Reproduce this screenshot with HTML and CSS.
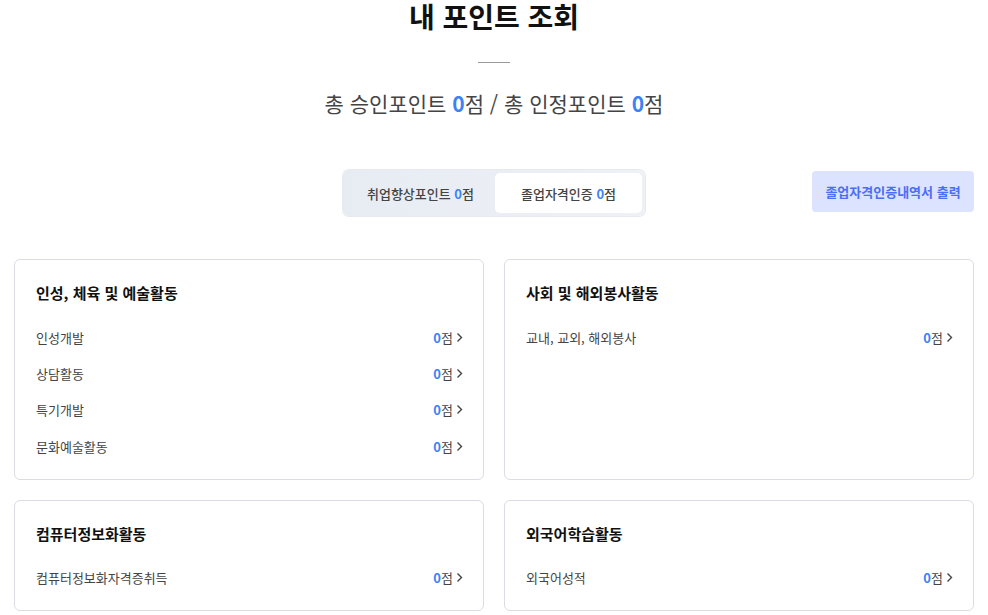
FILE: index.html
```html
<!DOCTYPE html>
<html lang="ko">
<head>
    <meta charset="UTF-8">
    <meta name="viewport" content="width=device-width, initial-scale=1.0">
    <title>내 포인트 조회</title>
    <link rel="stylesheet" href="styles.css">
</head>
<body>
    <div class="page">
        <!-- 상단 제목 -->
        <h1 class="page-title">내 포인트 조회</h1>
        <div class="divider"></div>
        <p class="summary">총 승인포인트 <b class="num">0</b>점 / 총 인정포인트 <b class="num">0</b>점</p>

        <!-- 탭 + 출력 버튼 -->
        <div class="toolbar">
            <div class="tabs">
                <button class="tab">취업향상포인트 <span class="num">0</span>점</button>
                <button class="tab active">졸업자격인증 <span class="num">0</span>점</button>
            </div>
            <button class="print-btn">졸업자격인증내역서 출력</button>
        </div>

        <!-- 영역별 카드 -->
        <div class="cards">
            <div class="card">
                <h2 class="card-title">인성, 체육 및 예술활동</h2>
                <ul class="items">
                    <li><span>인성개발</span><a href="#" class="score"><span class="num">0</span>점<svg width="7" height="11" viewBox="0 0 7 11"><path d="M1.5 1.5l4 4-4 4" fill="none" stroke="#444" stroke-width="1.4"/></svg></a></li>
                    <li><span>상담활동</span><a href="#" class="score"><span class="num">0</span>점<svg width="7" height="11" viewBox="0 0 7 11"><path d="M1.5 1.5l4 4-4 4" fill="none" stroke="#444" stroke-width="1.4"/></svg></a></li>
                    <li><span>특기개발</span><a href="#" class="score"><span class="num">0</span>점<svg width="7" height="11" viewBox="0 0 7 11"><path d="M1.5 1.5l4 4-4 4" fill="none" stroke="#444" stroke-width="1.4"/></svg></a></li>
                    <li><span>문화예술활동</span><a href="#" class="score"><span class="num">0</span>점<svg width="7" height="11" viewBox="0 0 7 11"><path d="M1.5 1.5l4 4-4 4" fill="none" stroke="#444" stroke-width="1.4"/></svg></a></li>
                </ul>
            </div>
            <div class="card">
                <h2 class="card-title">사회 및 해외봉사활동</h2>
                <ul class="items">
                    <li><span>교내, 교외, 해외봉사</span><a href="#" class="score"><span class="num">0</span>점<svg width="7" height="11" viewBox="0 0 7 11"><path d="M1.5 1.5l4 4-4 4" fill="none" stroke="#444" stroke-width="1.4"/></svg></a></li>
                </ul>
            </div>
            <div class="card">
                <h2 class="card-title">컴퓨터정보화활동</h2>
                <ul class="items">
                    <li><span>컴퓨터정보화자격증취득</span><a href="#" class="score"><span class="num">0</span>점<svg width="7" height="11" viewBox="0 0 7 11"><path d="M1.5 1.5l4 4-4 4" fill="none" stroke="#444" stroke-width="1.4"/></svg></a></li>
                </ul>
            </div>
            <div class="card">
                <h2 class="card-title">외국어학습활동</h2>
                <ul class="items">
                    <li><span>외국어성적</span><a href="#" class="score"><span class="num">0</span>점<svg width="7" height="11" viewBox="0 0 7 11"><path d="M1.5 1.5l4 4-4 4" fill="none" stroke="#444" stroke-width="1.4"/></svg></a></li>
                </ul>
            </div>
        </div>
    </div>
</body>
</html>
```
FILE: styles.css
```css
/* 기본 */
body {
    margin: 0;
    background-color: #fff;
    font-family: "Noto Sans CJK KR", "Noto Sans", sans-serif;
    color: #333;
}

.page {
    width: 960px;
    margin: 0 auto;
}

.num {
    color: #3b82f6;
    font-weight: 700;
}

/* 제목 영역 */
.page-title {
    margin: 0;
    font-size: 28px;
    line-height: 32px;
    font-weight: 700;
    color: #111;
    text-align: center;
}

.divider {
    width: 32px;
    height: 1px;
    margin: 30px auto 0;
    background-color: #999;
}

.summary {
    margin: 26px 0 0;
    font-size: 21px;
    line-height: 28px;
    font-weight: 400;
    color: #444;
    text-align: center;
}

/* 탭 + 버튼 */
.toolbar {
    display: grid;
    grid-template-columns: 1fr auto 1fr;
    align-items: start;
    margin-top: 53px;
}

.tabs {
    grid-column: 2;
    display: flex;
    padding: 3px;
    border-radius: 6px;
    background: linear-gradient(90deg, #e7ecf3, #eef1f6);
    box-shadow: 0 0 0 1px #e6eaf0;
}

.tab {
    width: 149px;
    height: 40px;
    border: none;
    border-radius: 5px;
    background: none;
    font-family: inherit;
    font-size: 13px;
    font-weight: 500;
    color: #444;
    cursor: pointer;
}

.tab.active {
    width: 147px;
    background-color: #fff;
}

.print-btn {
    grid-column: 3;
    justify-self: end;
    width: 162px;
    height: 41px;
    margin-top: 1px;
    border: none;
    border-radius: 4px;
    background-color: #dbe3ff;
    font-family: inherit;
    font-size: 13px;
    font-weight: 700;
    color: #4c6ef5;
    cursor: pointer;
}

/* 카드 */
.cards {
    display: grid;
    grid-template-columns: 1fr 1fr;
    gap: 20px;
    margin-top: 43px;
}

.card {
    padding: 23px 20px 14px 21px;
    border: 1px solid #dcdde2;
    border-radius: 6px;
}

.card-title {
    margin: 0 0 16px;
    font-size: 15px;
    line-height: 20px;
    font-weight: 700;
    color: #111;
}

.items {
    list-style: none;
    margin: 0;
    padding: 0;
}

.items li {
    display: flex;
    justify-content: space-between;
    align-items: center;
    height: 36.4px;
    font-size: 13px;
    color: #444;
}

.score {
    display: flex;
    align-items: center;
    gap: 3px;
    color: #444;
    text-decoration: none;
}

.score .num {
    margin-right: -3px;
}
```
